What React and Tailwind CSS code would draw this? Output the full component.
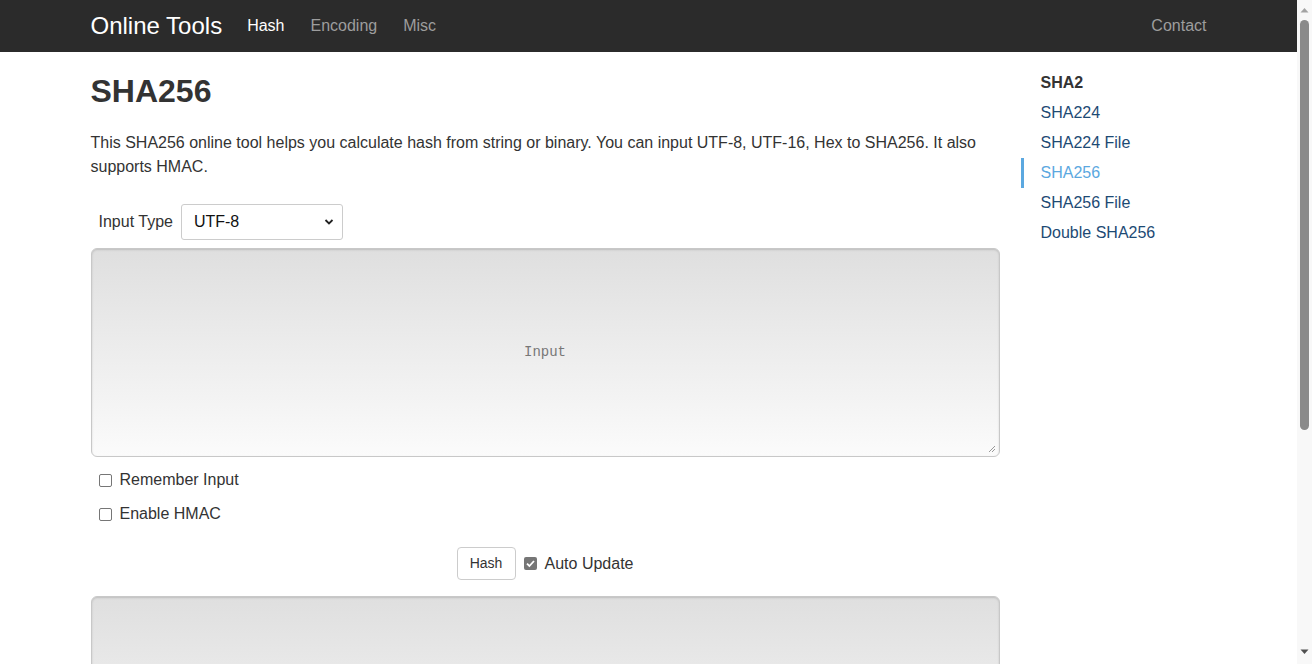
import React from "react";

function NavBar() {
  return (
    <div className="h-[52px] bg-[#2b2b2b]">
      <div className="w-[1140px] mx-auto px-3 h-full flex items-center">
        <span className="text-[24px] text-white mr-[25px]">Online Tools</span>
        <span className="text-[16px] text-white mr-[26px]">Hash</span>
        <span className="text-[16px] text-[#9d9d9d] mr-[26px]">Encoding</span>
        <span className="text-[16px] text-[#9d9d9d]">Misc</span>
        <span className="ml-auto text-[16px] text-[#9d9d9d]">Contact</span>
      </div>
    </div>
  );
}

function Check({ checked, label }) {
  return (
    <label className="flex items-center gap-[8px] text-[16px] text-[#333]">
      {checked ? (
        <span className="w-[13px] h-[13px] rounded-[2px] bg-[#767676] flex items-center justify-center">
          <svg width="11" height="11" viewBox="0 0 11 11">
            <path d="M2 5.6 L4.4 8 L9 3" stroke="white" strokeWidth="1.8" fill="none" />
          </svg>
        </span>
      ) : (
        <span className="w-[13px] h-[13px] rounded-[2px] border border-[#767676] bg-white" />
      )}
      <span>{label}</span>
    </label>
  );
}

function TextBox({ placeholder, h }) {
  return (
    <div
      className={`${h} rounded-[6px] border border-[#c8c8c8] shadow-[inset_0_1px_2px_rgba(0,0,0,0.15)] bg-gradient-to-b from-[#dfdfdf] to-[#fbfbfb] flex items-center justify-center relative`}
    >
      {placeholder && (
        <span className="font-['Liberation_Mono',monospace] text-[14px] text-[#777]">{placeholder}</span>
      )}
      {placeholder && (
        <svg className="absolute right-[3px] bottom-[3px]" width="9" height="9" viewBox="0 0 9 9">
          <path d="M8 2 L2 8 M8 5 L5 8" stroke="#999" strokeWidth="1" />
        </svg>
      )}
    </div>
  );
}

function ScrollBar() {
  return (
    <div className="w-[15px] h-[664px] bg-[#f8f8f8] flex flex-col items-center">
      <div className="h-[20px] flex items-center justify-center">
        <svg width="9" height="6" viewBox="0 0 9 6">
          <path d="M0.5 5.5 L4.5 1 L8.5 5.5 Z" fill="#a3a3a3" />
        </svg>
      </div>
      <div className="w-[9px] h-[410px] rounded-[5px] bg-[#8a8a8a]" />
      <div className="flex-1" />
      <div className="h-[24px] flex items-center justify-center">
        <svg width="9" height="6" viewBox="0 0 9 6">
          <path d="M0.5 0.5 L4.5 5 L8.5 0.5 Z" fill="#505050" />
        </svg>
      </div>
    </div>
  );
}

export default function App() {
  return (
    <div className="flex h-[664px] overflow-hidden bg-white font-['Liberation_Sans',Arial,sans-serif] text-[#333]">
      <div className="w-[1297px] overflow-hidden">
        <NavBar />
        <div className="w-[1140px] mx-auto px-3 flex">
          <div className="w-[909px]">
            <h1 className="text-[32px] font-bold leading-[1.1] mt-[22px] mb-[22px] text-[#333]">SHA256</h1>
            <p className="text-[16px] leading-[24px] mb-[25px]">
              This SHA256 online tool helps you calculate hash from string or binary. You can input UTF-8, UTF-16, Hex to SHA256. It also supports HMAC.
            </p>
            <div className="flex items-center pl-[8px] mb-[8px]">
              <span className="text-[16px] mr-[8px]">Input Type</span>
              <div className="w-[162px] h-[36px] border border-[#ccc] rounded-[3px] bg-white flex items-center justify-between pl-[12px] pr-[8px]">
                <span className="text-[16px] text-[#111]">UTF-8</span>
                <svg width="10" height="8" viewBox="0 0 10 8">
                  <path d="M1.5 2 L5 5.5 L8.5 2" stroke="#222" strokeWidth="1.8" fill="none" />
                </svg>
              </div>
            </div>
            <TextBox placeholder="Input" h="h-[209px]" />
            <div className="pl-[8px] mt-[11px] flex flex-col gap-[10px]">
              <Check label="Remember Input" />
              <Check label="Enable HMAC" />
            </div>
            <div className="flex items-center justify-center gap-[8px] mt-[21px]">
              <button className="w-[59px] h-[33px] border border-[#ccc] rounded-[4px] bg-white text-[14px] text-[#333]">Hash</button>
              <Check checked label="Auto Update" />
            </div>
            <div className="mt-[16px]">
              <TextBox h="h-[209px]" />
            </div>
          </div>
          <div className="ml-[21px] mt-[16px]">
            <div className="pl-[20px] h-[30px] flex items-center text-[16px] font-bold text-[#333]">SHA2</div>
            <div className="pl-[20px] h-[30px] flex items-center text-[16px] text-[#1d4a74]">SHA224</div>
            <div className="pl-[20px] h-[30px] flex items-center text-[16px] text-[#1d4a74]">SHA224 File</div>
            <div className="pl-[17px] h-[30px] flex items-center text-[16px] text-[#5ba8e0] border-l-[3px] border-[#5ba8e0]">SHA256</div>
            <div className="pl-[20px] h-[30px] flex items-center text-[16px] text-[#1d4a74]">SHA256 File</div>
            <div className="pl-[20px] h-[30px] flex items-center text-[16px] text-[#1d4a74]">Double SHA256</div>
          </div>
        </div>
      </div>
      <ScrollBar />
    </div>
  );
}
